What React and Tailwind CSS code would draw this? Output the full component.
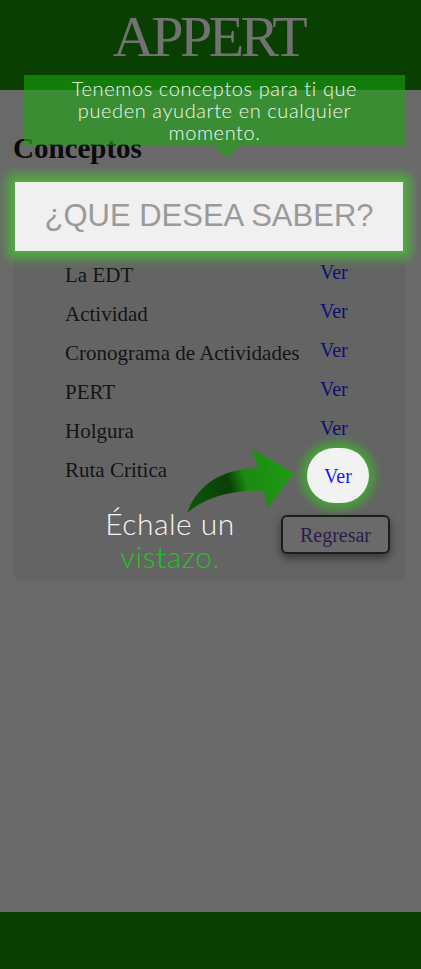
const conceptos = [
  "La EDT",
  "Actividad",
  "Cronograma de Actividades",
  "PERT",
  "Holgura",
  "Ruta Critica",
];

function CurvedArrow() {
  return (
    <svg width="125" height="75" viewBox="180 445 125 75" className="absolute left-[167px] top-[192px]">
      <defs>
        <linearGradient id="arrowFill" x1="187" y1="500" x2="295" y2="470" gradientUnits="userSpaceOnUse">
          <stop offset="0" stopColor="#0d5508" />
          <stop offset="0.4" stopColor="#0a4006" />
          <stop offset="0.55" stopColor="#1b8a12" />
          <stop offset="1" stopColor="#1f9c12" />
        </linearGradient>
      </defs>
      <path
        d="M187,513 C198,484 222,469 258,468 L252,449 L294,473 L268,508 L264,491 C236,489 206,496 187,513 Z"
        fill="url(#arrowFill)"
      />
    </svg>
  );
}

export default function App() {
  return (
    <div
      className="relative min-h-[969px] flex flex-col bg-[#696969]"
      style={{ fontFamily: '"Liberation Serif", "Times New Roman", serif' }}
    >
      {/* Header */}
      <header className="h-[90px] bg-[#0a3f02] flex justify-center pt-[6px]">
        <h1 className="text-[58px] leading-none tracking-[-3.5px] text-[#727272] pt-[2px] pr-[4px]">APPERT</h1>
      </header>

      <main className="flex-1 px-[13px] pt-[44px]">
        <h2 className="text-[29px] leading-none font-bold text-[#0a0a0a] mb-[17px]">Conceptos</h2>

        {/* Search box (highlighted) */}
        <div className="relative z-10 h-[73px] w-[392px] bg-[#f0f0f0] border-2 border-[#52a846] shadow-[0_0_10px_6px_rgba(80,180,60,0.85)] flex items-center justify-center">
          <span
            className="text-[31px] text-[#9a9a9a]"
            style={{ fontFamily: '"Liberation Sans", Arial, sans-serif' }}
          >
            ¿QUE DESEA SABER?
          </span>
        </div>

        {/* Card */}
        <div className="relative w-[392px] bg-[#646464] rounded-b-md pt-[3px] pb-[26px]">
          {conceptos.map((c, i) => (
            <div key={c} className="relative h-[39px] grid grid-cols-[255px_auto] pl-[52px] items-center">
              <span className="text-[21px] text-[#141414]">{c}</span>
              {i === conceptos.length - 1 ? (
                <span className="absolute left-[294px] top-[-3px] w-[62px] h-[55px] rounded-full bg-[#f2f2f2] shadow-[0_0_10px_6px_rgba(60,185,40,0.75)] flex items-center justify-center text-[20px] text-[#1a1aff]">
                  Ver
                </span>
              ) : (
                <span className="text-[20px] text-[#0e0e76] mb-[8px]">Ver</span>
              )}
            </div>
          ))}

          <div className="flex justify-end pr-[15px] mt-[25px]">
            <button className="w-[109px] h-[39px] rounded-[6px] border-2 border-[#1c1c1c] bg-[#6a6a6a] text-[20px] text-[#2c1c4c] shadow-[0_4px_9px_rgba(0,0,0,0.45)]">
              Regresar
            </button>
          </div>

          {/* Overlay hint */}
          <CurvedArrow />
          <div
            className="absolute left-[47px] top-[254px] w-[220px] text-center text-[30px] leading-[33px] font-light tracking-[0.5px]"
            style={{ fontFamily: 'Lato, "Open Sans", sans-serif' }}
          >
            <div className="text-[#f4f4f4]">Échale un</div>
            <div className="text-[#20c420]">vistazo.</div>
          </div>
        </div>
      </main>

      <footer className="h-[57px] bg-[#0a3f02]" />

      {/* Tooltip */}
      <div className="absolute left-[24px] top-[75px] w-[381px]">
        <div
          className="h-[70px] bg-[rgba(27,165,15,0.6)] text-center text-[20px] leading-[22px] font-light tracking-[0.6px] text-[#f2f6f0] pt-[2px]"
          style={{ fontFamily: 'Lato, "Open Sans", sans-serif' }}
        >
          Tenemos conceptos para ti que
          <br />
          pueden ayudarte en cualquier
          <br />
          momento.
        </div>
        <div className="ml-[189px] w-0 h-0 border-x-[14px] border-x-transparent border-t-[13px] border-t-[rgba(27,165,15,0.6)]" />
      </div>
    </div>
  );
}
